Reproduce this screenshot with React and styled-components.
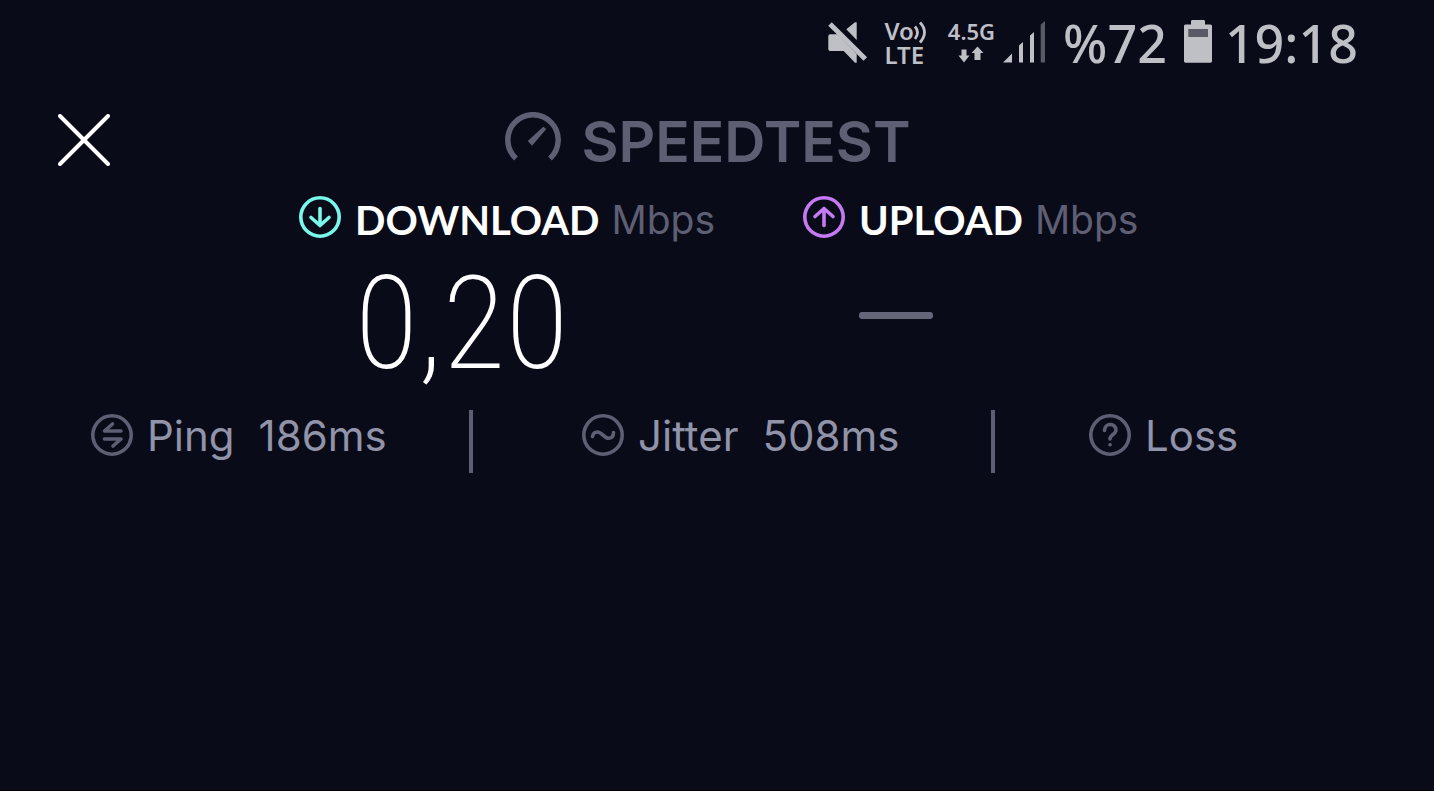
import React from 'react';
import styled, { createGlobalStyle } from 'styled-components';

const GlobalStyle = createGlobalStyle`
  * {
    box-sizing: border-box;
  }
  body {
    margin: 0;
    background: #090b19;
    font-family: Inter, 'Liberation Sans', sans-serif;
  }
`;

const Screen = styled.div`
  min-height: 100vh;
  background: #090b19;
  border-bottom: 1px solid #000;
`;

const StatusBar = styled.div`
  display: flex;
  justify-content: flex-end;
  align-items: flex-start;
  padding: 20px 76px 0 24px;
  height: 88px;
  color: #bfbfc6;
  font-family: 'Noto Sans', sans-serif;
  svg {
    display: block;
    flex: none;
  }
`;

const StatusText = styled.span`
  font-size: 52px;
  line-height: 46px;
  font-weight: 500;
  margin: 0 ${props => props.after || '0'} 0 ${props => props.before};
`;

const Network = styled.div`
  display: flex;
  flex-direction: column;
  align-items: ${props => props.align || 'flex-start'};
  margin: 0 ${props => props.after || '0'} 0 16px;
  font-size: ${props => props.size || '24px'};
  line-height: 22px;
  font-weight: 600;
`;

const NetworkRow = styled.div`
  display: flex;
`;

const Header = styled.header`
  display: grid;
  grid-template-columns: 1fr auto 1fr;
  align-items: start;
  padding: 24px 76px 0 58px;
  height: 108px;
`;

const CloseButton = styled.button`
  justify-self: start;
  padding: 2px 0 0;
  border: 0;
  background: none;
  cursor: pointer;
  svg {
    display: block;
  }
`;

const Logo = styled.h1`
  display: flex;
  align-items: flex-start;
  gap: 20px;
  margin: 0;
  color: #5f5f73;
  font-size: 57px;
  line-height: 60px;
  font-weight: 600;
`;

const Results = styled.section`
  display: grid;
  grid-template-columns: 1fr 1fr;
  padding: 0 127px 0 299px;
`;

const Result = styled.div`
  height: 214px;
`;

const ResultTitle = styled.h2`
  display: flex;
  align-items: flex-start;
  margin: 0;
  color: #fff;
  font-family: Lato, sans-serif;
  font-size: 40px;
  line-height: 48px;
  font-weight: 700;
  svg {
    margin-right: 14px;
  }
`;

const Unit = styled.span`
  margin-left: 12px;
  color: #5f5f73;
  font-family: Inter, sans-serif;
  font-size: 39px;
  font-weight: 400;
`;

const ResultValue = styled.div`
  padding-left: 56px;
  color: #fff;
  font-family: 'Roboto Condensed', Roboto, sans-serif;
  font-size: 130px;
  line-height: 160px;
  font-weight: 200;
`;

const EmptyValue = styled.div`
  width: 74px;
  height: 7px;
  margin: 68px 0 0 56px;
  border-radius: 3px;
  background: #66667a;
`;

const Metrics = styled.section`
  display: grid;
  grid-template-columns: 473fr 522fr 439fr;
`;

const Metric = styled.div`
  display: flex;
  align-items: flex-start;
  height: 63px;
  padding: 4px 0 0 ${props => props.inset};
  border-right: ${props => (props.last ? '0' : '4px solid #5f5f73')};
  color: #9193a8;
  font-size: 42px;
  line-height: 44px;
  svg {
    color: #5f5f73;
    margin-right: 14px;
  }
`;

const MetricValue = styled.span`
  margin-left: 24px;
`;

const RoundIcon = ({ color = 'currentColor', children }) => (
  <svg width="42" height="42" viewBox="0 0 42 42" fill="none" stroke={color} strokeWidth="3.6" strokeLinecap="round" strokeLinejoin="round">
    <circle cx="21" cy="21" r="19.2" />
    {children}
  </svg>
);

const MuteIcon = () => (
  <svg width="41" height="44" viewBox="0 0 41 44" fill="currentColor">
    <path d="M19.3 9.3 28 2.3h1.7V20zM3 14.3h7.7L29.7 34v8.7H28L16.7 31H3Q1.3 31 1.3 29V16.5Q1.3 14.3 3 14.3z" />
    <path d="M3 4 38.3 39" stroke="currentColor" strokeWidth="5" />
  </svg>
);

const VoiceWaves = () => (
  <svg width="14" height="24" viewBox="0 0 14 24" fill="none" stroke="currentColor" strokeWidth="2.8">
    <path d="M1 6.5Q6 12.5 1 19M6 2.5Q15 12 6 22.5" />
  </svg>
);

const DataArrows = () => (
  <svg width="26" height="22" viewBox="0 0 26 22" fill="currentColor">
    <path d="M3.5 7.5h5v6h3L6 20.5.5 13.5h3zM16.500 18v-7h-3L19.500 4.500l6 6.500h-3v7z" />
  </svg>
);

const SignalIcon = () => (
  <svg width="43" height="44" viewBox="0 0 43 44" fill="currentColor">
    <path d="M0 42.5 9 33.5v9zM16 25.5l4-3.5v20.5h-4zM27 15.5l4-3.5v30.5h-4z" />
    <path d="M37.7 4.5 42 1v41.5h-4.3z" fill="#595a66" />
  </svg>
);

const BatteryIcon = () => (
  <svg width="28" height="43" viewBox="0 0 28 43">
    <path d="M8 0h12q1 0 1 1.5v3h5.5q1.5 0 1.5 1.5v35q0 1.7-1.5 1.7h-25Q0 42.7 0 41V6q0-1.5 1.5-1.5H7v-3Q7 0 8 0z" fill="currentColor" />
    <path d="M4.3 9h19.7v8H4.3z" fill="#595a66" />
  </svg>
);

const GaugeIcon = () => (
  <svg width="56" height="50" viewBox="0 0 56 50" fill="none">
    <path d="M11 46.5A25.2 25.2 0 1 1 45 46.5" stroke="currentColor" strokeWidth="5.5" />
    <path d="M22.7 29 38.3 14.7 41.3 17 27 33.7z" fill="currentColor" />
  </svg>
);

const App = () => (
  <Screen>
    <GlobalStyle />
    <StatusBar>
      <MuteIcon />
      <Network after="4px">
        <NetworkRow>
          Vo
          <VoiceWaves />
        </NetworkRow>
        <span>LTE</span>
      </Network>
      <Network after="8px" size="22px" align="center">
        <span>4.5G</span>
        <DataArrows />
      </Network>
      <SignalIcon />
      <StatusText before="17px" after="17px">%72</StatusText>
      <BatteryIcon />
      <StatusText before="13px">19:18</StatusText>
    </StatusBar>
    <Header>
      <CloseButton aria-label="Close">
        <svg width="52" height="52" viewBox="0 0 52 52" stroke="#fff" strokeWidth="4" strokeLinecap="round">
          <path d="M2 2 50 50M50 2 2 50" />
        </svg>
      </CloseButton>
      <Logo>
        <GaugeIcon />
        SPEEDTEST
      </Logo>
    </Header>
    <Results>
      <Result>
        <ResultTitle>
          <RoundIcon color="#79f7ea">
            <path d="M21 12.5V29M12 21.5 21 29.5 30 21.5" />
          </RoundIcon>
          DOWNLOAD
          <Unit>Mbps</Unit>
        </ResultTitle>
        <ResultValue>0,20</ResultValue>
      </Result>
      <Result>
        <ResultTitle>
          <RoundIcon color="#c679f2">
            <path d="M21 29.5V13M12 20.5 21 12.5 30 20.5" />
          </RoundIcon>
          UPLOAD
          <Unit>Mbps</Unit>
        </ResultTitle>
        <EmptyValue />
      </Result>
    </Results>
    <Metrics>
      <Metric inset="91px">
        <RoundIcon>
          <path d="M30 17H13.5L21.5 10M13.5 25H30L22 32" />
        </RoundIcon>
        Ping
        <MetricValue>186ms</MetricValue>
      </Metric>
      <Metric inset="109px">
        <RoundIcon>
          <path d="M10.5 22.5C11 19.5 13 18 15.5 18 20 18 22 24.3 26.5 24.3 30 24.3 31.5 22 31.5 18.5" />
        </RoundIcon>
        Jitter
        <MetricValue>508ms</MetricValue>
      </Metric>
      <Metric inset="94px" last>
        <RoundIcon>
          <path d="M15.5 16.5C15.5 8.5 27 8.5 27 16 27 20.5 21 20.5 21 25M21 30.7h.1" />
        </RoundIcon>
        Loss
      </Metric>
    </Metrics>
  </Screen>
);

export default App;
